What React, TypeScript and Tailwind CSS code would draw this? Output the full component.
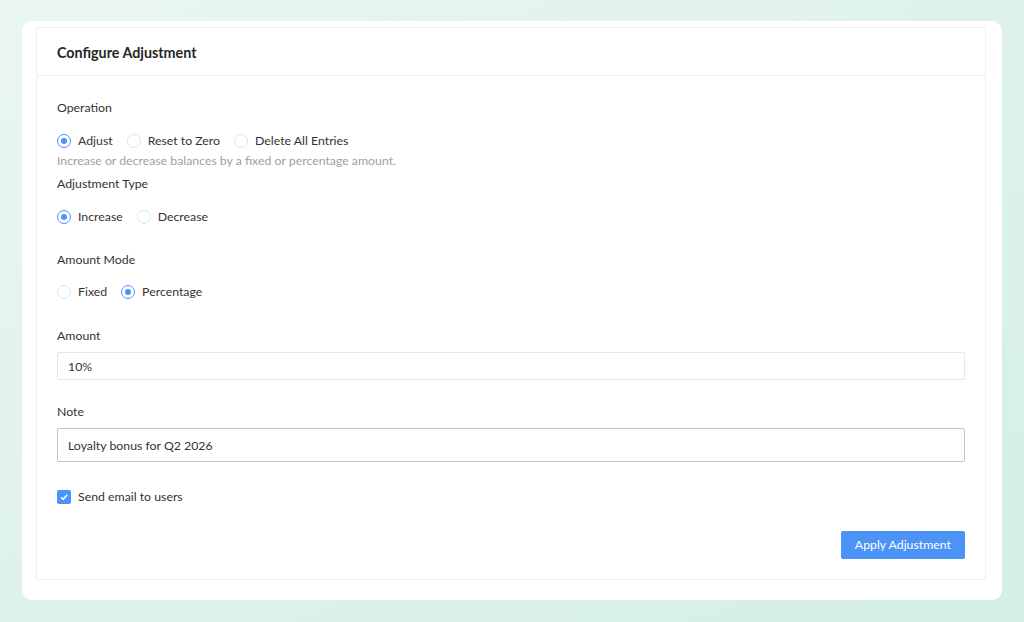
import { useState } from "react";

const font = { fontFamily: "Lato, 'Open Sans', sans-serif" };

const Radio = ({ checked, label, onClick }: { checked: boolean; label: string; onClick: () => void }) => (
  <label className="flex items-center h-5 mr-[14px] cursor-pointer" onClick={onClick}>
    <span
      className={
        checked
          ? "w-[14px] h-[14px] rounded-full border border-[#4b93f7] flex items-center justify-center"
          : "w-[14px] h-[14px] rounded-full border border-[#e3e3e3]"
      }
    >
      {checked && <span className="w-[6px] h-[6px] rounded-full bg-[#4b93f7]" />}
    </span>
    <span className="ml-[7px] text-[12.3px] text-[#333]">{label}</span>
  </label>
);

const Label = ({ children }: { children: string }) => (
  <div className="h-5 leading-5 text-[12.3px] text-[#333]">{children}</div>
);

export default function App() {
  const [op, setOp] = useState("adjust");
  const [type, setType] = useState("increase");
  const [mode, setMode] = useState("percentage");
  const [email, setEmail] = useState(true);

  return (
    <div
      className="w-[1024px] h-[622px] bg-gradient-to-br from-[#eaf6f1] to-[#d3efe3] pt-[21px] px-[22px]"
      style={font}
    >
      <div className="bg-white rounded-[10px] pt-[6px] pl-[14px] pr-[16px] pb-[20px]">
        <div className="border border-[#f0f0f0]">
          <div className="h-[48px] flex items-center pt-[2px] px-[20px] border-b border-[#f0f0f0] text-[14.3px] font-bold text-[#262626]">
            Configure Adjustment
          </div>
          <div className="px-[20px] pt-[22px] pb-[20px]">
            <Label>Operation</Label>
            <div className="flex mt-[13px]">
              <Radio checked={op === "adjust"} label="Adjust" onClick={() => setOp("adjust")} />
              <Radio checked={op === "reset"} label="Reset to Zero" onClick={() => setOp("reset")} />
              <Radio checked={op === "delete"} label="Delete All Entries" onClick={() => setOp("delete")} />
            </div>
            <div className="h-5 leading-5 text-[12.3px] text-[#a0a0a0]">
              Increase or decrease balances by a fixed or percentage amount.
            </div>
            <div className="mt-[3px]">
              <Label>Adjustment Type</Label>
            </div>
            <div className="flex mt-[13px]">
              <Radio checked={type === "increase"} label="Increase" onClick={() => setType("increase")} />
              <Radio checked={type === "decrease"} label="Decrease" onClick={() => setType("decrease")} />
            </div>
            <div className="mt-[23px]">
              <Label>Amount Mode</Label>
            </div>
            <div className="flex mt-[12px]">
              <Radio checked={mode === "fixed"} label="Fixed" onClick={() => setMode("fixed")} />
              <Radio checked={mode === "percentage"} label="Percentage" onClick={() => setMode("percentage")} />
            </div>
            <div className="mt-[24px]">
              <Label>Amount</Label>
            </div>
            <input
              className="mt-[6px] w-full h-[28px] px-[10px] border border-[#e6e6e6] rounded-[2px] text-[12.3px] text-[#333] outline-none"
              defaultValue="10%"
            />
            <div className="mt-[22px]">
              <Label>Note</Label>
            </div>
            <input
              className="mt-[6px] w-full h-[34px] px-[10px] border border-[#c4c4c4] rounded-[2px] text-[12.3px] text-[#333] outline-none"
              defaultValue="Loyalty bonus for Q2 2026"
            />
            <label className="flex items-center h-5 mt-[25px] cursor-pointer" onClick={() => setEmail(!email)}>
              <span
                className={
                  email
                    ? "w-[14px] h-[14px] rounded-[2px] bg-[#4b93f7] flex items-center justify-center"
                    : "w-[14px] h-[14px] rounded-[2px] border border-[#d9d9d9]"
                }
              >
                {email && (
                  <svg width="10" height="10" viewBox="0 0 10 10">
                    <path d="M2 5.2 L4.2 7.3 L8.2 2.8" fill="none" stroke="white" strokeWidth="1.5" />
                  </svg>
                )}
              </span>
              <span className="ml-[7px] text-[12.3px] text-[#333]">Send email to users</span>
            </label>
            <div className="flex justify-end mt-[24px]">
              <button className="h-[28px] px-[14px] bg-[#4b93f7] text-white text-[12.3px] rounded-[2px]">
                Apply Adjustment
              </button>
            </div>
          </div>
        </div>
      </div>
    </div>
  );
}
